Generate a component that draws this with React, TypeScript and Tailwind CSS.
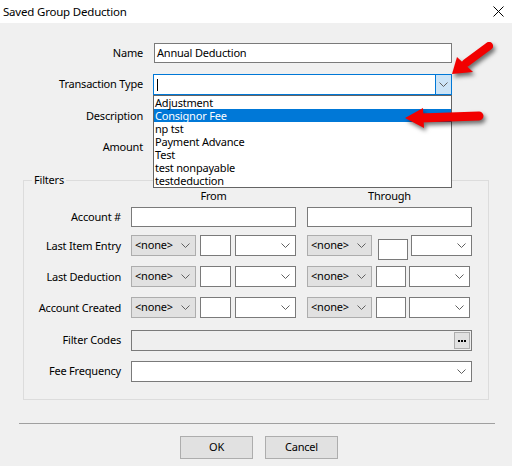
import React from "react";

function Chevron() {
  return (
    <svg width="9" height="5" viewBox="0 0 9 5" className="shrink-0">
      <path d="M0.5 0.5 L4.5 4.5 L8.5 0.5" fill="none" stroke="#606060" strokeWidth="1" />
    </svg>
  );
}

function TextBox({ className = "" }: { className?: string }) {
  return <div className={`h-[20px] border border-[#7a7a7a] bg-white shrink-0 ${className}`} />;
}

function Combo({ className = "", none = false }: { className?: string; none?: boolean }) {
  return (
    <div
      className={`h-[21px] shrink-0 flex items-center justify-between pl-[3px] pr-[5px] border ${
        none ? "bg-[#e1e1e1] border-[#adadad]" : "bg-white border-[#7a7a7a]"
      } ${className}`}
    >
      <span>{none ? "<none>" : ""}</span>
      <Chevron />
    </div>
  );
}

function DateRow({ label, throughBoxClass }: { label: string; throughBoxClass: string }) {
  return (
    <div className="flex items-start h-[21px]">
      <div className="w-[97px] text-right leading-[21px]">{label}</div>
      <Combo none className="ml-[10px] w-[65px]" />
      <TextBox className="ml-[4px] w-[31px] h-[21px]" />
      <Combo className="ml-[4px] w-[61px]" />
      <Combo none className="ml-[11px] w-[65px]" />
      <TextBox className={throughBoxClass} />
      <Combo className="ml-[3px] w-[61px]" />
    </div>
  );
}

const types = [
  "Adjustment",
  "Consignor Fee",
  "np tst",
  "Payment Advance",
  "Test",
  "test nonpayable",
  "testdeduction",
];

export default function App() {
  return (
    <div className="relative w-[512px] h-[466px] bg-[#f0f0f0] text-[11px] tracking-[-0.2px] text-black font-['Noto_Sans',sans-serif] overflow-hidden">
      {/* title bar */}
      <div className="h-[23px] bg-white flex items-center justify-between pl-[3px] pr-[8px]">
        <span className="text-[11.5px]">Saved Group Deduction</span>
        <svg width="11" height="11" viewBox="0 0 11 11">
          <path d="M0.5 0.5 L10.5 10.5 M10.5 0.5 L0.5 10.5" stroke="#000" strokeWidth="1" />
        </svg>
      </div>

      {/* main fields */}
      <div className="flex flex-col">
        <div className="mt-[20px] flex items-center h-[20px]">
          <div className="w-[143px] text-right">Name</div>
          <div className="ml-[11px] w-[298px] h-[20px] border border-[#7a7a7a] bg-white flex items-center pl-[2px]">
            Annual Deduction
          </div>
        </div>

        <div className="mt-[11px] flex items-center h-[21px]">
          <div className="w-[143px] text-right">Transaction Type</div>
          <div className="relative ml-[10px] w-[299px] h-[21px] border border-[#0078d7] bg-white flex">
            <div className="flex-1 flex items-center pl-[3px]">
              <div className="w-px h-[12px] bg-black" />
            </div>
            <div className="w-[16px] h-full bg-[#cce4f7] border-l border-[#0078d7] flex items-center justify-center">
              <Chevron />
            </div>
            {/* open dropdown list */}
            <div className="absolute left-[-1px] top-[20px] w-[299px] h-[93px] border border-[#646464] bg-white z-10">
              {types.map((t) => (
                <div
                  key={t}
                  className={`h-[13px] leading-[13px] pl-[1px] ${
                    t === "Consignor Fee" ? "bg-[#0078d7] text-white" : ""
                  }`}
                >
                  {t}
                </div>
              ))}
            </div>
          </div>
        </div>

        <div className="mt-[11px] flex items-center h-[20px]">
          <div className="w-[143px] text-right">Description</div>
          <TextBox className="ml-[10px] w-[299px]" />
        </div>

        <div className="mt-[11px] flex items-center h-[20px]">
          <div className="w-[143px] text-right">Amount</div>
          <TextBox className="ml-[10px] w-[120px]" />
        </div>

        {/* filters group */}
        <div className="relative mt-[23px] ml-[23px] w-[466px] h-[220px] border border-[#dcdcdc]">
          <span className="absolute -top-[8px] left-[8px] px-[2px] leading-[14px] bg-[#f0f0f0]">Filters</span>
          <div className="flex flex-col">
            <div className="mt-[8px] h-[14px] flex leading-[14px]">
              <div className="ml-[107px] w-[165px] text-center">From</div>
              <div className="ml-[11px] w-[165px] text-center">Through</div>
            </div>

            <div className="mt-[4px] flex items-center h-[20px]">
              <div className="w-[97px] text-right">Account #</div>
              <TextBox className="ml-[10px] w-[165px]" />
              <TextBox className="ml-[11px] w-[165px]" />
            </div>

            <div className="mt-[8px]">
              <DateRow label="Last Item Entry" throughBoxClass="ml-[6px] mt-[4px] w-[30px] h-[21px]" />
            </div>
            <div className="mt-[10px]">
              <DateRow label="Last Deduction" throughBoxClass="ml-[4px] w-[30px] h-[21px]" />
            </div>
            <div className="mt-[10px]">
              <DateRow label="Account Created" throughBoxClass="ml-[4px] w-[30px] h-[21px]" />
            </div>

            <div className="mt-[12px] flex items-center h-[21px]">
              <div className="w-[97px] text-right">Filter Codes</div>
              <div className="ml-[10px] w-[341px] h-[21px] border border-[#7a7a7a] bg-[#efefef] flex items-center justify-end pr-[1px]">
                <div className="w-[16px] h-[17px] bg-[#e1e1e1] border border-[#adadad] flex items-center justify-center gap-[1px]">
                  <div className="w-[2px] h-[2px] bg-black" />
                  <div className="w-[2px] h-[2px] bg-black" />
                  <div className="w-[2px] h-[2px] bg-black" />
                </div>
              </div>
            </div>

            <div className="mt-[10px] flex items-center h-[21px]">
              <div className="w-[97px] text-right">Fee Frequency</div>
              <Combo className="ml-[10px] w-[341px]" />
            </div>
          </div>
        </div>

        <div className="mt-[23px] ml-[19px] w-[476px] h-px bg-[#a0a0a0]" />

        <div className="mt-[12px] flex">
          <button className="ml-[180px] w-[73px] h-[23px] bg-[#e1e1e1] border border-[#adadad]">OK</button>
          <button className="ml-[12px] w-[73px] h-[23px] bg-[#e1e1e1] border border-[#adadad]">Cancel</button>
        </div>
      </div>

      {/* callout arrows */}
      <svg
        className="absolute left-0 top-0 pointer-events-none z-20 drop-shadow-[2px_3px_2px_rgba(0,0,0,0.55)]"
        width="512"
        height="466"
      >
        <line x1="489" y1="46" x2="466" y2="63" stroke="#f20000" strokeWidth="8" strokeLinecap="round" />
        <polygon points="452,74 457,57 473,72" fill="#f20000" />
        <line x1="479" y1="116" x2="420" y2="118" stroke="#f20000" strokeWidth="9" strokeLinecap="round" />
        <polygon points="405,118 423,108 424,128" fill="#f20000" />
      </svg>
    </div>
  );
}
